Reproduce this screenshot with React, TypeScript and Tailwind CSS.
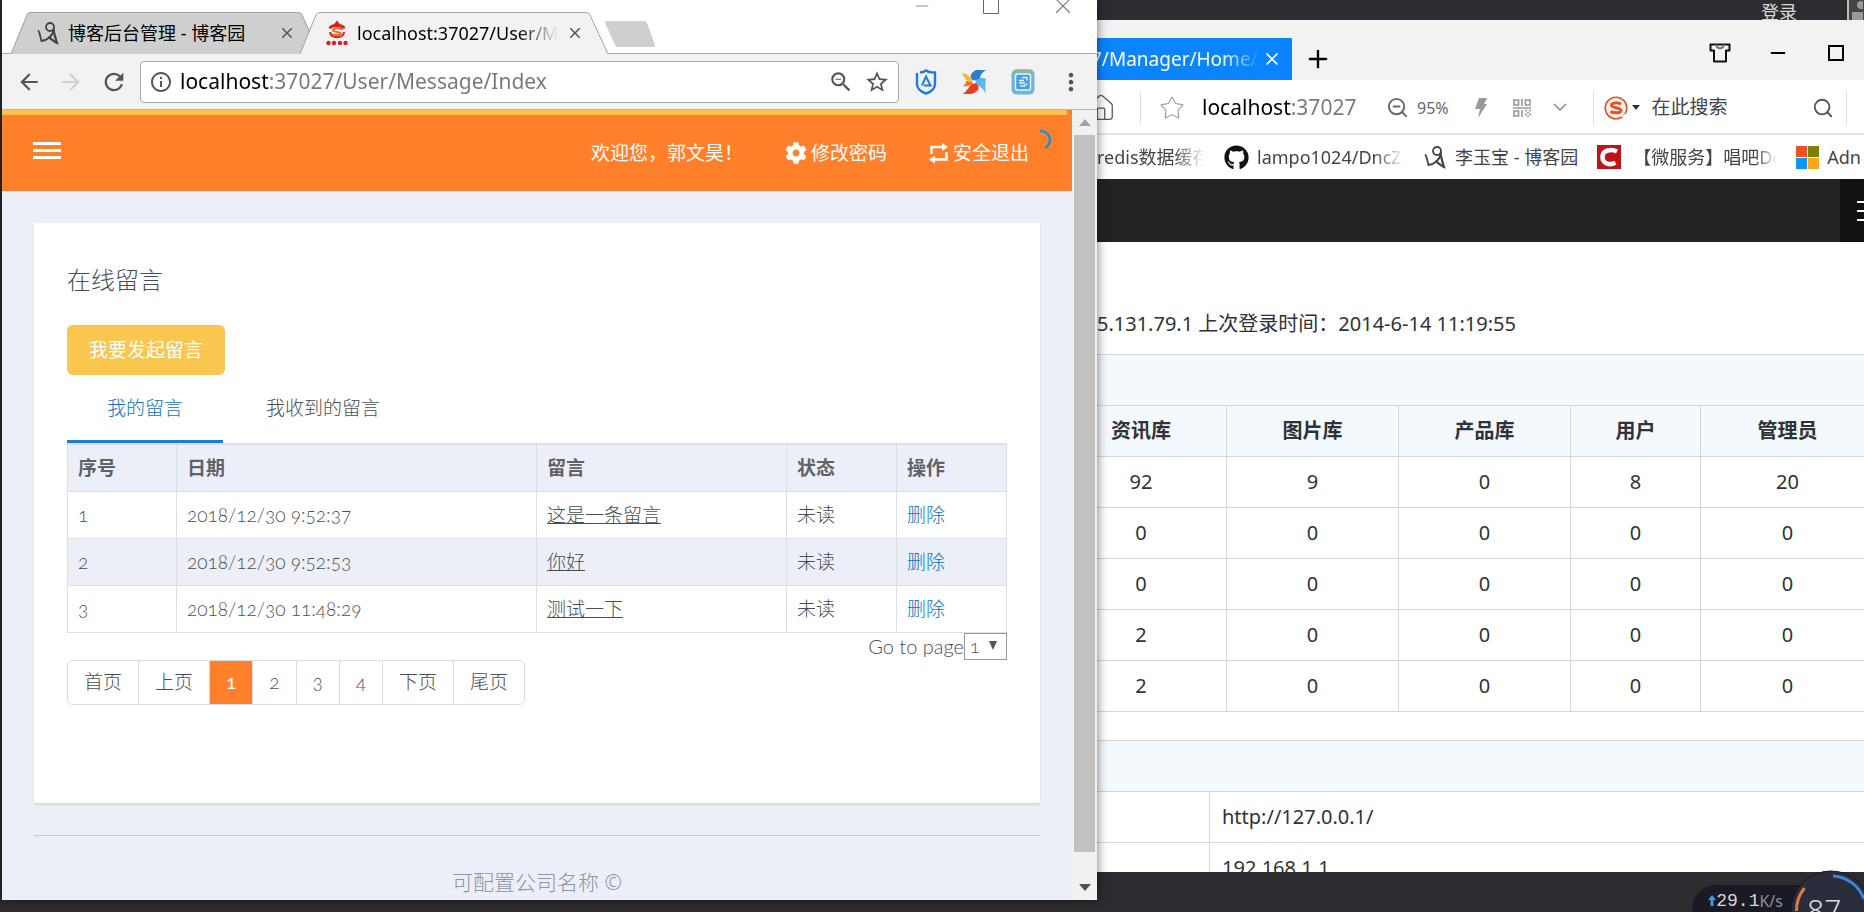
import type { ReactNode } from "react";
import { Home, Minus, Plus, Search, Star, X, ZoomOut } from "lucide-react";
import { FaCog, FaGithub } from "react-icons/fa";
import {
  MdArrowBack,
  MdArrowForward,
  MdClose,
  MdInfoOutline,
  MdMoreVert,
  MdRefresh,
  MdStarBorder,
  MdZoomOut,
} from "react-icons/md";

const MESSAGES = [
  { id: 1, date: "2018/12/30 9:52:37", text: "这是一条留言", status: "未读" },
  { id: 2, date: "2018/12/30 9:52:53", text: "你好", status: "未读" },
  { id: 3, date: "2018/12/30 11:48:29", text: "测试一下", status: "未读" },
];

const PAGES = ["首页", "上页", "1", "2", "3", "4", "下页", "尾页"];

const STAT_COLUMNS = ["资讯库", "图片库", "产品库", "用户", "管理员"];

const STAT_ROWS = [
  [92, 9, 0, 8, 20],
  [0, 0, 0, 0, 0],
  [0, 0, 0, 0, 0],
  [2, 0, 0, 0, 0],
  [2, 0, 0, 0, 0],
];

const SERVER_ROWS = ["http://127.0.0.1/", "192.168.1.1"];

function BlogIcon() {
  return (
    <svg viewBox="0 0 24 24" className="size-6 shrink-0" fill="none" stroke="#444" strokeLinecap="round">
      <circle cx="14" cy="6" r="4" strokeWidth="1.800" />
      <path d="M2.500 10c1.500 2 1.500 5 3 10 5-.5 11-4 12.500-12" strokeWidth="1.800" />
      <path d="M17.500 9c.8 4 2 8 3.500 13-2.500-1-5.500-4-8-5.500" strokeWidth="2.200" />
    </svg>
  );
}

function MessageFavicon() {
  return (
    <svg viewBox="0 0 24 26" className="h-[26px] w-6 shrink-0" fill="none">
      <path d="M12 0.500l3.500 4.500h-7z" fill="#d5231b" />
      <path d="M5 8.500C6 4.500 18 4.500 19 8.500" stroke="#d5231b" strokeWidth="3" />
      <path d="M18 9.500c-4-2-10-1.500-10 .8s8 1.200 8 3.200-6 2.200-10 .5" stroke="#e0642a" strokeWidth="1.800" />
      <path d="M5 12c0 7 14 7 14 0" stroke="#d5231b" strokeWidth="2" />
      <g fill="#d5231b">
        <circle cx="3.500" cy="23" r="2.200" />
        <circle cx="9" cy="23" r="2.200" />
        <circle cx="15" cy="23" r="2.200" />
        <circle cx="20.500" cy="23" r="2.200" />
      </g>
    </svg>
  );
}

function ShieldIcon() {
  return (
    <svg viewBox="0 0 22 26" className="h-[26px] w-[22px]" fill="none" stroke="#1a7be8">
      <path d="M5 3.500C7 3.300 9 3 11 1.500 13 3 16 3.500 20 3.500V15c0 5-4.500 8-9 9.500C6.500 23 2 20 2 15V4" strokeWidth="2.400" />
      <path d="M7 16.500L11 7.500l4.500 9H9" strokeWidth="2" />
    </svg>
  );
}

function PinwheelIcon() {
  return (
    <svg viewBox="0 0 26 26" className="size-[26px]">
      <path d="M13 12C7 9 10 3 15 1h10c-4 3-6 5-6 9z" fill="#2f7fc4" />
      <path d="M13 13c4-4 8-5 12-3-1 5-1 10 0 15-2-4-5-8-12-10z" fill="#5cb5ec" />
      <path d="M13 13c5 3 6 6 3 9-4 4-9 3-14 3 4-3 6-8 11-12z" fill="#e2401f" />
      <path d="M13 13c-2 3-6 5-11 4 2-1 3-3 3-5z" fill="#f0701f" />
      <path d="M12 13C6 14 3 9 1 4c5 1 9 3 11 9z" fill="#f5b93a" />
      <circle cx="13" cy="13" r="1.800" fill="#fff" />
    </svg>
  );
}

function NoteIcon() {
  return (
    <svg viewBox="0 0 24 26" className="h-[26px] w-6" fill="none">
      <rect x="0.500" y="0.500" width="23" height="25" rx="5" fill="#6fb5d8" />
      <path d="M1 5c0-3 2-4.500 5-4.500h12c3 0 5 1.500 5 4.500z" fill="#8fb3a4" />
      <rect x="4.500" y="5" width="15" height="16" rx="2" fill="#4a9edc" stroke="#e4f4fd" strokeWidth="1.500" />
      <path d="M11 8.500h5v3M8 11.500h5M8 14h6M9 17.500l2-1 2 1 3-3" stroke="#e4f4fd" strokeWidth="1.300" />
    </svg>
  );
}

function LoopIcon() {
  return (
    <svg viewBox="0 0 20 22" className="h-[22px] w-5" fill="none" stroke="currentColor" strokeWidth="2.400">
      <path d="M2.500 12V5H15M17.500 10v7.500H5" />
      <path d="M13 1l6 4-6 4zM6 13.500l-6 4 6 4z" fill="currentColor" stroke="none" />
    </svg>
  );
}

function ShirtIcon() {
  return (
    <svg viewBox="0 0 22 20" className="h-5 w-[22px]" fill="none" stroke="#111" strokeWidth="2">
      <path d="M1.500 1.500h19v6h-3.500v11H5v-11H1.500z" strokeLinejoin="round" />
      <path d="M7.500 1.500c0 5 7 5 7 0" stroke="#777" />
    </svg>
  );
}

function QrIcon() {
  return (
    <svg viewBox="0 0 18 18" className="size-[18px]" fill="none" stroke="#999" strokeWidth="1.600">
      <rect x="1" y="1" width="4.500" height="5" />
      <path d="M9 0v7M0 9h18M9 11v7" />
      <rect x="12.500" y="1" width="4.500" height="5" />
      <rect x="1" y="12" width="4.500" height="5" />
      <path d="M12 11.500h2M16 11.500h2M14 13.500h2M12 15.500h2M16 15.500h2M14 17.500h2" />
    </svg>
  );
}

function SogouIcon() {
  return (
    <svg viewBox="0 0 24 24" className="size-6">
      <circle cx="12" cy="12" r="10.800" fill="#fff6ec" stroke="#e9502e" strokeWidth="1.600" />
      <path
        d="M17 8.300C14 6 7.500 6.500 7.500 9.300s9.500 2.200 9.500 5.200-7.500 3-10.500.7"
        fill="none"
        stroke="#e9502e"
        strokeWidth="3"
      />
      <path d="M16.500 21l5-3.500 1 3z" fill="#fff" />
    </svg>
  );
}

function MicrosoftIcon() {
  return (
    <svg viewBox="0 0 23 23" className="size-[23px] shrink-0">
      <path d="M0 0h11v11H0z" fill="#f25022" />
      <path d="M12 0h11v11H12z" fill="#7d8000" />
      <path d="M0 12h11v11H0z" fill="#0a97f5" />
      <path d="M12 12h11v11H12z" fill="#ffa51a" />
    </svg>
  );
}

function ChromeTab({
  icon,
  title,
  active = false,
  className,
}: {
  icon: ReactNode;
  title: string;
  active?: boolean;
  className: string;
}) {
  return (
    <div className={`relative flex h-[42px] items-center pr-6 pl-[25px] ${className}`}>
      <svg
        viewBox="0 0 308 42"
        preserveAspectRatio="none"
        className="absolute inset-0 h-full w-full"
        fill={active ? "#f2f2f2" : "#cfcfcf"}
        stroke="#a3a3a8"
      >
        <path d="M0 42L16 3Q17 .5 20 .5H286Q289 .5 290 3L308 42" />
      </svg>
      <button type="button" className="relative flex min-w-0 flex-1 items-center gap-2 text-left text-lg text-black">
        {icon}
        <span className={active ? "overflow-hidden whitespace-nowrap mask-r-from-80%" : "whitespace-nowrap"}>
          {title}
        </span>
      </button>
      <button type="button" aria-label="关闭标签页" className="relative text-[#555]">
        <MdClose size={18} />
      </button>
    </div>
  );
}

function ChromeWindow() {
  return (
    <section className="absolute top-0 bottom-3 left-[2px] flex w-[1095px] flex-col bg-white shadow-[0_0_10px_rgba(0,0,0,0.55)]">
      <div className="flex h-[54px] items-end border-b border-[#a9a9ad] pl-[9px]">
        <ChromeTab className="-mb-px w-[309px]" icon={<BlogIcon />} title="博客后台管理 - 博客园" />
        <ChromeTab
          active
          className="-mb-px -ml-5 w-[308px]"
          icon={<MessageFavicon />}
          title="localhost:37027/User/M"
        />
        <button type="button" aria-label="新标签页" className="mb-[6px] -ml-1">
          <svg viewBox="0 0 52 26" className="h-[26px] w-[52px]" fill="#cfcfcf">
            <path d="M2 0h38q2 0 3 2l8 22q0 2-2 2H14q-2 0-3-2L1 2q0-2 1-2z" />
          </svg>
        </button>
        <div className="mr-[21px] mb-[34px] ml-auto flex items-center gap-[51px] text-[#777]">
          <button type="button" aria-label="最小化">
            <Minus size={20} strokeWidth={1} />
          </button>
          <button type="button" aria-label="最大化" className="text-[#666]">
            <svg viewBox="0 0 16 16" className="size-4" fill="none" stroke="currentColor">
              <path d="M.5 .5h15v15H.5z" />
            </svg>
          </button>
          <button type="button" aria-label="关闭">
            <X size={26} strokeWidth={1} />
          </button>
        </div>
      </div>

      <div className="flex h-14 items-center border-b border-[#b6b4b8] bg-[#f2f2f2] pr-3 text-[#555]">
        <button type="button" aria-label="后退" className="ml-[14px]">
          <MdArrowBack size={26} />
        </button>
        <button type="button" aria-label="前进" className="ml-4 text-[#d0d0d0]">
          <MdArrowForward size={26} />
        </button>
        <button type="button" aria-label="刷新" className="ml-4">
          <MdRefresh size={28} />
        </button>
        <div className="ml-3 flex h-[42px] flex-1 items-center rounded border border-[#a9a8ae] bg-white pr-2 pl-2">
          <MdInfoOutline size={24} className="shrink-0" />
          <input
            aria-label="地址栏"
            defaultValue="localhost:37027/User/Message/Index"
            className="ml-[7px] min-w-0 flex-1 bg-[linear-gradient(to_right,#000_89px,#777_89px)] bg-clip-text text-[21px] text-transparent outline-none"
          />
          <button type="button" aria-label="缩放">
            <MdZoomOut size={26} />
          </button>
          <button type="button" aria-label="收藏" className="ml-[10px]">
            <MdStarBorder size={26} />
          </button>
        </div>
        <button type="button" aria-label="广告拦截" className="ml-4">
          <ShieldIcon />
        </button>
        <button type="button" aria-label="迅雷" className="ml-6">
          <PinwheelIcon />
        </button>
        <button type="button" aria-label="笔记" className="ml-6">
          <NoteIcon />
        </button>
        <button type="button" aria-label="菜单" className="ml-[22px]">
          <MdMoreVert size={28} />
        </button>
      </div>

      <div className="flex min-h-0 flex-1">
        <MessagePage />
        <div className="flex w-[25px] flex-col items-center bg-[#f1f1f1]">
          <div className="flex h-[25px] items-center">
            <svg viewBox="0 0 12 7" className="h-[7px] w-3" fill="#a3a3a3">
              <path d="M6 0l6 7H0z" />
            </svg>
          </div>
          <div className="w-[21px] flex-1 bg-[#c1c1c1]" />
          <div className="flex h-12 items-end pb-[9px]">
            <svg viewBox="0 0 12 7" className="h-[7px] w-3" fill="#505050">
              <path d="M6 7l6-7H0z" />
            </svg>
          </div>
        </div>
      </div>
    </section>
  );
}

function MessagePage() {
  return (
    <div className="min-w-0 flex-1 overflow-hidden bg-[#eceff7] text-[19px] leading-7 font-light text-[#4a4e53]">
      <header className="relative flex h-[81px] items-center bg-[#ff7f2a] pr-[43px] pl-[31px] text-white">
        <div className="absolute top-0 right-[5px] left-0 h-[5px] bg-[#fbc14b]" />
        <button type="button" aria-label="展开菜单" className="flex flex-col gap-1">
          <span className="h-[3px] w-7 bg-white" />
          <span className="h-[3px] w-7 bg-white" />
          <span className="h-[3px] w-7 bg-white" />
        </button>
        <div className="ml-auto flex items-center gap-[42px] pt-1 font-normal">
          <span>欢迎您，郭文昊！</span>
          <a href="#password" className="flex items-center gap-1">
            <FaCog size={22} />
            修改密码
          </a>
          <a href="#logout" className="flex items-center gap-1">
            <LoopIcon />
            安全退出
          </a>
        </div>
        <svg
          viewBox="0 0 14 22"
          className="absolute top-[19px] right-[19px] h-[22px] w-[14px]"
          fill="none"
          stroke="#1f8fd1"
          strokeWidth="2.500"
        >
          <path d="M1 2a9 9 0 0 1 5 17" />
        </svg>
      </header>

      <main className="mx-8 mt-8 h-[580px] bg-white px-[33px] pt-[43px] shadow-[0_2px_2px_#d5dbd8]">
        <h1 className="text-2xl leading-7">在线留言</h1>
        <button type="button" className="mt-[31px] block h-[50px] rounded-md bg-[#f9c64f] px-[22px] font-normal text-white">
          我要发起留言
        </button>
        <div role="tablist" className="flex h-[68px]">
          <button
            type="button"
            role="tab"
            aria-selected="true"
            className="border-b-[3px] border-[#1a7fd0] px-10 text-[#0f72c4]"
          >
            我的留言
          </button>
          <button type="button" role="tab" aria-selected="false" className="border-b-[3px] border-transparent px-[43px]">
            我收到的留言
          </button>
        </div>
        <table className="w-full table-fixed border-collapse border border-t-2 border-[#dcdfe4] text-left">
          <colgroup>
            <col className="w-[109px]" />
            <col />
            <col className="w-[250px]" />
            <col className="w-[110px]" />
            <col className="w-[110px]" />
          </colgroup>
          <thead>
            <tr className="h-[47px] bg-[#eceff7] text-[#5f6368]">
              {["序号", "日期", "留言", "状态", "操作"].map((h) => (
                <th key={h} className="border border-t-2 border-[#dcdfe4] px-[10px] font-bold">
                  {h}
                </th>
              ))}
            </tr>
          </thead>
          <tbody>
            {MESSAGES.map((m) => (
              <tr key={m.id} className="h-[47px] even:bg-[#eceff7]">
                <td className="border border-[#dcdfe4] px-[10px] font-['Lato','Noto_Sans_CJK_SC',sans-serif] oldstyle-nums">
                  {m.id}
                </td>
                <td className="border border-[#dcdfe4] px-[10px] font-['Lato','Noto_Sans_CJK_SC',sans-serif] oldstyle-nums">
                  {m.date}
                </td>
                <td className="border border-[#dcdfe4] px-[10px]">
                  <a href={`#message-${m.id}`} className="underline">
                    {m.text}
                  </a>
                </td>
                <td className="border border-[#dcdfe4] px-[10px]">{m.status}</td>
                <td className="border border-[#dcdfe4] px-[10px]">
                  <a href={`#delete-${m.id}`} className="text-[#0f72c4]">
                    删除
                  </a>
                </td>
              </tr>
            ))}
          </tbody>
        </table>
        <div className="flex items-center justify-end font-['Lato','Noto_Sans_CJK_SC',sans-serif]">
          <label htmlFor="goto" className="text-xl leading-6">
            Go to page
          </label>
          <div className="relative">
            <select
              id="goto"
              className="block h-[27px] w-[43px] appearance-none border border-[#999] bg-white pl-[5px] text-lg leading-6 oldstyle-nums"
            >
              <option>1</option>
            </select>
            <svg viewBox="0 0 8 9" className="pointer-events-none absolute top-2 right-[10px] h-[9px] w-2" fill="#555">
              <path d="M0 0h8L4 9z" />
            </svg>
          </div>
        </div>
        <nav
          aria-label="分页"
          className="inline-flex h-[45px] divide-x divide-[#d9dce0] overflow-hidden rounded-md border border-[#d9dce0] font-['Lato','Noto_Sans_CJK_SC',sans-serif] oldstyle-nums"
        >
          {PAGES.map((p) => (
            <a
              key={p}
              href={`#page-${p}`}
              className={`flex items-center px-4 ${p === "1" ? "bg-[#ff7f2a] font-normal text-white" : ""}`}
            >
              {p}
            </a>
          ))}
        </nav>
      </main>

      <footer className="mx-8 mt-8 border-t border-[#c3c6d3] pt-8 text-center text-[21px] text-[#9094a0]">
        可配置公司名称 ©
      </footer>
    </div>
  );
}

function AdminWindow() {
  return (
    <section className="absolute top-5 right-0 bottom-10 left-[1055px] flex flex-col overflow-hidden bg-white text-[#333]">
      <div className="flex h-[60px] shrink-0 items-end bg-[#f2f2f2]">
        <div className="flex h-[42px] w-[237px] items-center bg-[#0a84ff] pr-[10px] text-[19px] text-white">
          <span className="flex-1 overflow-hidden pl-9 whitespace-nowrap mask-r-from-80%">7/Manager/Home/</span>
          <button type="button" aria-label="关闭标签页">
            <X size={20} strokeWidth={2} />
          </button>
        </div>
        <button type="button" aria-label="新标签页" className="mb-[7px] ml-3 text-black">
          <Plus size={28} strokeWidth={2} />
        </button>
        <div className="mr-[17px] mb-4 ml-auto flex items-center gap-9 text-black">
          <button type="button" aria-label="皮肤">
            <ShirtIcon />
          </button>
          <button type="button" aria-label="最小化">
            <Minus size={22} strokeWidth={2} />
          </button>
          <button type="button" aria-label="最大化">
            <svg viewBox="0 0 16 16" className="mx-[3px] size-4" fill="none" stroke="currentColor" strokeWidth="2">
              <path d="M1 1h14v14H1z" />
            </svg>
          </button>
        </div>
      </div>

      <div className="flex h-[55px] shrink-0 items-center border-b-2 border-[#e4e4e4] pt-[2px] text-[#555]">
        <button type="button" aria-label="主页" className="ml-[31px]">
          <Home size={30} strokeWidth={1} />
        </button>
        <span className="ml-6 h-8 w-px bg-[#dedede]" />
        <button type="button" aria-label="收藏" className="ml-[18px] text-[#999]">
          <Star size={26} strokeWidth={1} />
        </button>
        <input
          aria-label="地址"
          defaultValue="localhost:37027"
          className="ml-[17px] w-[170px] bg-[linear-gradient(to_right,#000_90px,#777_90px)] bg-clip-text text-[21px] text-transparent outline-none"
        />
        <button type="button" aria-label="缩放" className="ml-[14px] flex items-center gap-2 text-base text-[#666]">
          <ZoomOut size={23} strokeWidth={2} />
          95%
        </button>
        <button type="button" aria-label="加速" className="ml-[26px]">
          <svg viewBox="0 0 12 20" className="h-5 w-3" fill="#999">
            <path d="M4 0h8L9 6h3L3 20l2-9H0z" />
          </svg>
        </button>
        <button type="button" aria-label="二维码" className="ml-[26px]">
          <QrIcon />
        </button>
        <button type="button" aria-label="更多" className="ml-[22px]">
          <svg viewBox="0 0 14 9" className="h-[9px] w-[14px]" fill="none" stroke="#888" strokeWidth="1.500">
            <path d="M1 1l6 6 6-6" />
          </svg>
        </button>
        <span className="ml-[26px] h-8 w-px bg-[#dedede]" />
        <button type="button" aria-label="搜索引擎" className="ml-[10px] flex items-center gap-1">
          <SogouIcon />
          <svg viewBox="0 0 8 5" className="h-[5px] w-2" fill="#333">
            <path d="M0 0h8L4 5z" />
          </svg>
        </button>
        <input
          aria-label="搜索"
          placeholder="在此搜索"
          className="ml-3 min-w-0 flex-1 text-[19px] outline-none placeholder:text-[#444]"
        />
        <button type="button" aria-label="搜索">
          <Search size={22} strokeWidth={2} />
        </button>
        <span className="mr-[17px] ml-3 h-8 w-px bg-[#dedede]" />
      </div>

      <nav className="flex h-11 shrink-0 items-center gap-[19px] pl-[42px] text-lg whitespace-nowrap text-[#444] *:shrink-0">
        <a href="#redis" className="w-[108px] overflow-hidden mask-r-from-70%">
          redis数据缓存
        </a>
        <a href="#github" className="flex items-center gap-2">
          <FaGithub size={25} className="text-[#111]" />
          <span className="w-[147px] overflow-hidden mask-r-from-80%">lampo1024/DncZ</span>
        </a>
        <a href="#blog" className="flex items-center gap-2">
          <BlogIcon />
          李玉宝 - 博客园
        </a>
        <a href="#micro" className="flex items-center gap-3">
          <svg viewBox="0 0 24 24" className="size-6 shrink-0">
            <path d="M0 0h24v24H0z" fill="#c1121a" />
            <path d="M20 6.500C14 3.500 5.500 5 5.500 12s7.500 8.500 13 5.800" fill="none" stroke="#fff" strokeWidth="4.500" />
          </svg>
          <span className="w-[144px] overflow-hidden mask-r-from-85%">【微服务】唱吧Dc</span>
        </a>
        <a href="#admin" className="flex items-center gap-2">
          <MicrosoftIcon />
          Adn
        </a>
      </nav>

      <div className="flex h-[63px] shrink-0 justify-end bg-[#222]">
        <button type="button" aria-label="菜单" className="flex w-6 flex-col items-end justify-center gap-[7px] bg-[#111]">
          <span className="h-[2px] w-[7px] bg-white" />
          <span className="h-[2px] w-[7px] bg-white" />
          <span className="h-[2px] w-[7px] bg-white" />
        </button>
      </div>

      <div className="text-xl leading-7 text-[#2f3236]">
        <p className="mt-[68px] pl-[42px]">5.131.79.1 上次登录时间：2014-6-14 11:19:55</p>
        <table className="mt-4 w-[820px] table-fixed border-collapse border border-[#d3d6da] text-center">
          <colgroup>
            <col className="w-[171px]" />
            <col className="w-[172px]" />
            <col className="w-[172px]" />
            <col className="w-[130px]" />
            <col />
          </colgroup>
          <thead className="bg-[#f4f9fd]">
            <tr className="h-[51px]">
              <th colSpan={5} className="border border-[#d3d6da]" />
            </tr>
            <tr className="h-[51px]">
              {STAT_COLUMNS.map((c) => (
                <th key={c} className="border border-[#d3d6da] font-bold">
                  {c}
                </th>
              ))}
            </tr>
          </thead>
          <tbody>
            {STAT_ROWS.map((row, i) => (
              <tr key={i} className="h-[51px]">
                {row.map((v, j) => (
                  <td key={j} className="border border-[#d3d6da]">
                    {v}
                  </td>
                ))}
              </tr>
            ))}
          </tbody>
        </table>
        <table className="mt-7 w-[820px] table-fixed border-collapse border border-[#d3d6da]">
          <colgroup>
            <col className="w-[154px]" />
            <col />
          </colgroup>
          <thead className="bg-[#f4f9fd]">
            <tr className="h-[51px]">
              <th colSpan={2} className="border border-[#d3d6da]" />
            </tr>
          </thead>
          <tbody>
            {SERVER_ROWS.map((value) => (
              <tr key={value} className="h-[51px]">
                <td className="border border-[#d3d6da]" />
                <td className="border border-[#d3d6da] px-3">{value}</td>
              </tr>
            ))}
          </tbody>
        </table>
      </div>
    </section>
  );
}

function SpeedWidget() {
  return (
    <div className="absolute right-0 bottom-0 flex h-[42px] items-end">
      <div className="-mr-3 flex h-[27px] items-center rounded-tl-3xl bg-[#191a24] pt-1 pr-5 pl-4 text-base text-[#d5d7dd]">
        <svg viewBox="0 0 8 11" className="h-[11px] w-2" fill="#3f95e8">
          <path d="M4 0l4 5H5.500v6h-3V5H0z" />
        </svg>
        <span className="font-['Liberation_Mono',monospace] text-lg leading-5">29.1</span>
        <span className="text-[#8d909a]">K/s</span>
      </div>
      <div className="relative h-[42px] w-[73px] overflow-hidden">
        <svg viewBox="0 0 73 42" className="absolute inset-0 h-full w-full" fill="none">
          <circle cx="40" cy="41" r="40" fill="#2b2d3c" stroke="#15161f" />
          <path d="M42 6a35 35 0 0 1 31 23" stroke="#3c86d6" strokeWidth="3" />
          <path d="M5.500 41a35 35 0 0 1 8-23" stroke="#e07a45" strokeWidth="3" />
        </svg>
        <span className="relative block pt-5 pl-4 text-3xl leading-10 font-light text-[#d9dbe2]">87</span>
      </div>
    </div>
  );
}

export default function App() {
  return (
    <div
      lang="zh-CN"
      className="relative h-screen w-full overflow-hidden bg-[#2d2d31] font-['Noto_Sans','Noto_Sans_CJK_SC',sans-serif]"
    >
      <div className="flex h-5 items-start justify-end overflow-hidden">
        <a href="#login" className="mr-[50px] text-lg leading-6 text-[#d8d8d8]">
          登录
        </a>
        <div className="flex h-5 w-[17px] items-start border-l-2 border-[#bbb] bg-[#444]">
          <svg viewBox="0 0 14 20" className="h-5 w-[14px]" fill="#999">
            <circle cx="12" cy="5" r="4" />
            <path d="M3 20v-8h11v8z" />
          </svg>
        </div>
      </div>
      <AdminWindow />
      <ChromeWindow />
      <SpeedWidget />
    </div>
  );
}
